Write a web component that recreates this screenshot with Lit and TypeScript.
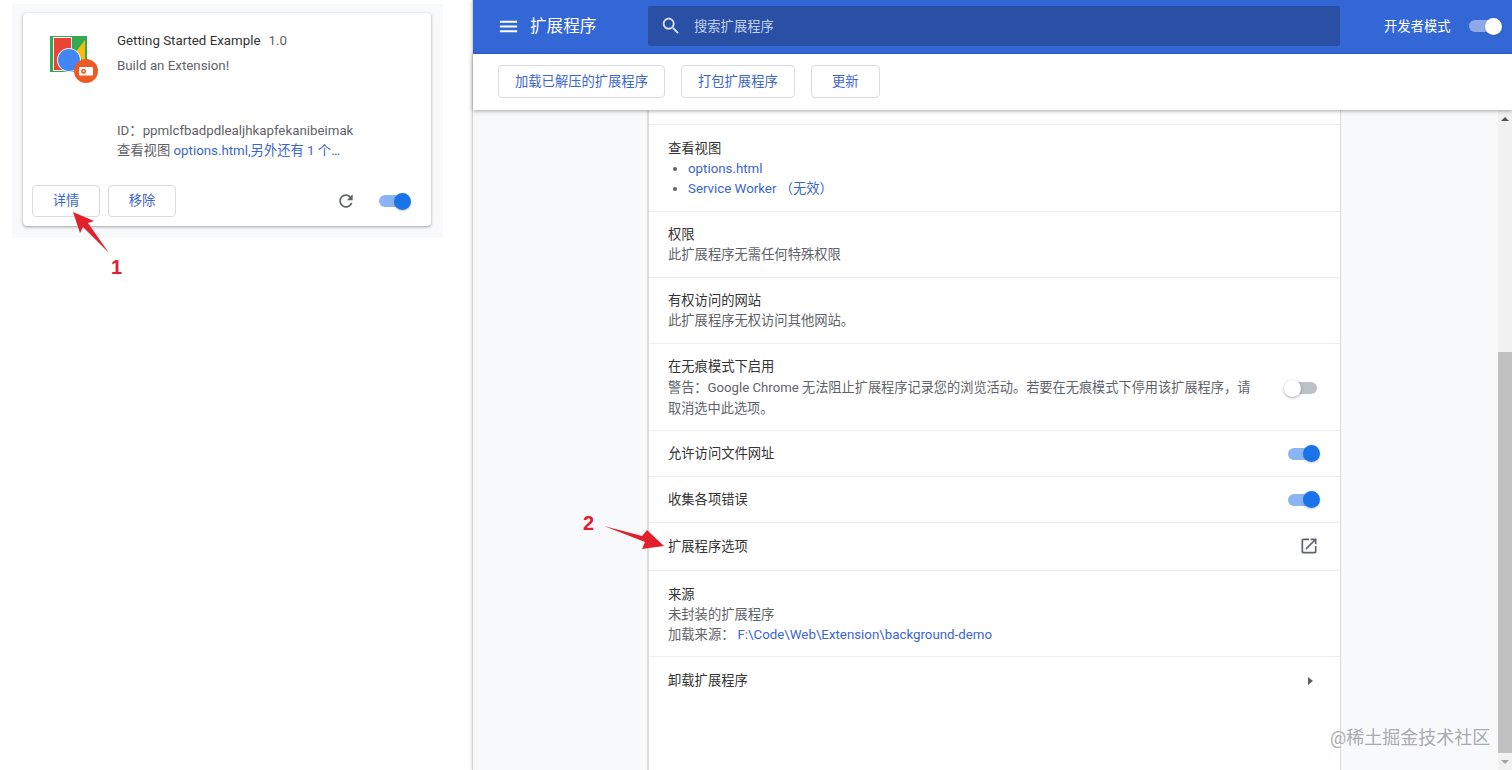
import { LitElement, html, css, svg } from "lit";
import { customElement, property } from "lit/decorators.js";

const ICONS = {
  menu: "M3 18h18v-2H3v2zm0-5h18v-2H3v2zm0-7v2h18V6H3z",
  search:
    "M15.5 14h-.79l-.28-.27C15.41 12.59 16 11.11 16 9.5 16 5.91 13.09 3 9.5 3S3 5.91 3 9.5 5.91 16 9.5 16c1.61 0 3.09-.59 4.23-1.57l.27.28v.79l5 4.99L20.49 19l-4.99-5zm-6 0C7.01 14 5 11.99 5 9.5S7.01 5 9.5 5 14 7.01 14 9.5 11.99 14 9.5 14z",
  refresh:
    "M17.65 6.35C16.2 4.9 14.21 4 12 4c-4.42 0-7.99 3.58-7.99 8s3.57 8 7.99 8c3.73 0 6.84-2.55 7.73-6h-2.08c-.82 2.33-3.04 4-5.65 4-3.31 0-6-2.69-6-6s2.69-6 6-6c1.66 0 3.14.69 4.22 1.78L13 11h7V4l-2.35 2.35z",
  open: "M19 19H5V5h7V3H5c-1.11 0-2 .9-2 2v14c0 1.1.89 2 2 2h14c1.1 0 2-.9 2-2v-7h-2v7zM14 3v2h3.59l-9.83 9.83 1.41 1.41L19 6.41V10h2V3h-7z",
};

const icon = (d: string, size: number, fill: string) => html`
  <svg width=${size} height=${size} viewBox="0 0 24 24" fill=${fill} style="flex:none;display:block">
    ${svg`<path d=${d}></path>`}
  </svg>
`;

@customElement("cr-toggle")
export class CrToggle extends LitElement {
  static styles = css`
    :host {
      display: block;
      position: relative;
      flex: none;
      width: 32px;
      height: 17px;
    }
    .bar {
      position: absolute;
      left: 0;
      right: 4px;
      top: 2.5px;
      height: 12px;
      border-radius: 6px;
      background: #8ab4f3;
    }
    .knob {
      position: absolute;
      right: 0;
      top: 0;
      width: 17px;
      height: 17px;
      border-radius: 50%;
      background: #1a73e8;
      box-shadow: 0 1px 2px rgba(60, 64, 67, 0.3);
    }
    :host([mode="off"]) {
      width: 33px;
    }
    :host([mode="off"]) .bar {
      left: 5px;
      right: 0;
      background: #bdc1c6;
    }
    :host([mode="off"]) .knob {
      left: 0;
      right: auto;
      background: #fff;
      box-shadow: 0 1px 3px rgba(60, 64, 67, 0.45);
    }
    :host([mode="light"]) {
      width: 33px;
    }
    :host([mode="light"]) .bar {
      background: #8ea9e4;
      right: 5px;
    }
    :host([mode="light"]) .knob {
      background: #fff;
    }
  `;

  @property({ reflect: true }) mode = "on";

  render() {
    return html`<div class="bar"></div><div class="knob"></div>`;
  }
}

@customElement("app-root")
export class AppRoot extends LitElement {
  static styles = css`
    :host {
      display: block;
      position: relative;
      width: 1512px;
      height: 770px;
      overflow: hidden;
      background: #fff;
      font-family: Roboto, "Noto Sans CJK SC", sans-serif;
      font-size: 13.3px;
      line-height: 20px;
      color: #333;
    }
    * {
      box-sizing: border-box;
    }
    .page {
      display: flex;
      height: 770px;
    }
    a {
      color: #3b66cf;
      text-decoration: none;
    }

    /* left screenshot */
    .left {
      flex: none;
      width: 472px;
      padding: 4px 0 0 12px;
    }
    .card-bg {
      width: 431px;
      height: 234px;
      padding: 9px 12px 9px 11px;
      background: #f8f9fa;
    }
    .card {
      display: flex;
      flex-direction: column;
      height: 213px;
      border-radius: 4px;
      background: #fff;
      box-shadow: 0 1px 2px rgba(60, 64, 67, 0.3), 0 1px 3px 1px rgba(60, 64, 67, 0.15);
    }
    .card-main {
      flex: 1;
      display: flex;
      padding: 18px 0 24px 27px;
    }
    .logo {
      flex: none;
      width: 67px;
    }
    .logo svg {
      display: block;
      margin-top: 5px;
    }
    .card-text {
      display: flex;
      flex-direction: column;
      flex: 1;
      color: #5f6368;
    }
    .name-line {
      display: flex;
      gap: 8px;
    }
    .name {
      color: #333;
    }
    .desc {
      margin-top: 5px;
    }
    .card-ext {
      margin-top: auto;
    }
    .card-foot {
      display: flex;
      align-items: center;
      gap: 8px;
      padding: 0 20px 9px 9px;
    }
    .card-foot .spacer {
      flex: 1;
    }
    .card-foot .reload {
      margin-right: 15px;
    }
    .btn {
      display: flex;
      align-items: center;
      justify-content: center;
      height: 33px;
      padding: 0 16px;
      border: 1px solid #dadce0;
      border-radius: 4px;
      background: #fff;
      color: #3b66cf;
    }
    .btn.small {
      width: 69px;
      padding: 0;
    }
    .card-foot .btn {
      width: 68px;
      height: 32px;
      padding: 0;
    }

    /* right screenshot */
    .right {
      flex: 1;
      min-width: 0;
      display: flex;
      flex-direction: column;
      border-left: 1px solid #d5d5d5;
      box-shadow: -1px 0 3px rgba(0, 0, 0, 0.12);
    }
    .header {
      flex: none;
      display: flex;
      height: 54px;
      padding: 6px 0 8px;
      background: #3367d6;
      color: #fff;
    }
    .brand {
      flex: none;
      display: flex;
      align-items: center;
      width: 175px;
      padding-left: 24px;
    }
    .brand span {
      margin-left: 10px;
      padding-top: 1px;
      font-size: 16.6px;
    }
    .search {
      flex: none;
      display: flex;
      align-items: center;
      width: 692px;
      padding-left: 12px;
      border-radius: 2px;
      background: #2a50a6;
      color: #c3d0ee;
    }
    .search span {
      margin-left: 12px;
      padding-top: 1px;
    }
    .mode {
      flex: 1;
      display: flex;
      align-items: center;
      padding-left: 44px;
      gap: 19px;
    }
    .mode span {
      padding-top: 1px;
    }
    .toolbar {
      flex: none;
      position: relative;
      z-index: 1;
      display: flex;
      align-items: center;
      gap: 16px;
      height: 56px;
      padding: 0 0 1px 25px;
      background: #fff;
      box-shadow: 0 1px 4px rgba(0, 0, 0, 0.35);
    }
    .body {
      flex: 1;
      min-height: 0;
      display: flex;
      background: #f8f9fa;
    }
    .center {
      flex: 1;
      padding-left: 174px;
    }
    .panel {
      width: 694px;
      height: 100%;
      padding-top: 14px;
      border-left: 2px solid #dcdcdc;
      border-right: 1px solid #dcdcdc;
      background: #fff;
    }
    .row {
      padding: 14px 20px 12px 19px;
      border-top: 1px solid #eeeeee;
      color: #5f6368;
    }
    .row .title {
      color: #333;
    }
    .row.tight {
      padding-top: 13px;
      padding-bottom: 12px;
    }
    .row.source {
      padding-top: 14px;
      padding-bottom: 11px;
    }
    .row ul {
      margin: 0;
      padding-left: 20px;
    }
    .row.warn {
      display: flex;
      justify-content: space-between;
      align-items: center;
      padding-top: 13px;
      padding-bottom: 11px;
    }
    .row.warn .warn-text {
      width: 590px;
    }
    .row.warn .warn-body {
      font-size: 13.2px;
      line-height: 21px;
    }
    .row.warn cr-toggle {
      margin-right: 3px;
    }
    .row.line {
      display: flex;
      align-items: center;
      justify-content: space-between;
      padding-top: 0;
      padding-bottom: 0;
      color: #333;
    }
    .row.line > svg {
      margin: -1px 1px 0 0;
    }
    .row.line.last {
      padding-top: 1px;
    }
    .h46 {
      height: 46px;
    }
    .h48 {
      height: 48px;
    }
    .source-link {
      margin-left: 3px;
    }
    .chevron {
      width: 0;
      height: 0;
      margin-right: 7px;
      border-left: 5px solid #5f6368;
      border-top: 4.5px solid transparent;
      border-bottom: 4.5px solid transparent;
    }
    .scrollbar {
      flex: none;
      display: flex;
      flex-direction: column;
      align-items: center;
      width: 14px;
      background: #f1f1f1;
    }
    .arrow-box {
      flex: none;
      display: flex;
      align-items: center;
      justify-content: center;
      width: 14px;
      height: 17px;
    }
    .up {
      border-left: 4px solid transparent;
      border-right: 4px solid transparent;
      border-bottom: 4px solid #505050;
    }
    .down {
      border-left: 4px solid transparent;
      border-right: 4px solid transparent;
      border-top: 4px solid #a3a3a3;
    }
    .track {
      flex: 1;
      width: 14px;
      padding-top: 225px;
    }
    .thumb {
      height: 401px;
      background: #c1c1c1;
    }

    /* annotations drawn over the screenshots */
    .marks {
      position: absolute;
      inset: 0;
      pointer-events: none;
    }
    .num {
      position: absolute;
      font: bold 20px/20px "Liberation Sans", sans-serif;
      color: #e2202c;
    }
    .n1 {
      left: 111px;
      top: 257px;
    }
    .n2 {
      left: 583px;
      top: 513px;
    }
    .watermark {
      position: absolute;
      left: 1330px;
      top: 726px;
      font-size: 18px;
      line-height: 24px;
      color: #a9abad;
      white-space: nowrap;
    }
  `;

  private renderLogo() {
    return html`
      <svg width="50" height="50" viewBox="0 0 50 50">
        <rect x="0" y="0" width="37" height="36" fill="#34a853"></rect>
        <rect x="3.5" y="1.5" width="18" height="33" fill="#ea4335" stroke="#f3f3f3" stroke-width="1"></rect>
        <path d="M35 4 L35 26 L25 17 Z" fill="#fbbc04"></path>
        <path d="M22 34 H36" stroke="#d6e6d8" stroke-width="1.5"></path>
        <circle cx="19" cy="24" r="11.5" fill="#4285f4" stroke="#e8eef8" stroke-width="1.2"></circle>
        <circle cx="36" cy="35" r="12" fill="#ee5a24"></circle>
        <rect x="29" y="31" width="14" height="8.5" rx="1" fill="#fff"></rect>
        <circle cx="33.5" cy="35.2" r="2.5" fill="#ee5a24"></circle>
        <circle cx="33.5" cy="35.2" r="0.9" fill="#fff"></circle>
      </svg>
    `;
  }

  private renderCard() {
    return html`
      <div class="left">
        <div class="card-bg">
          <div class="card">
            <div class="card-main">
              <div class="logo">${this.renderLogo()}</div>
              <div class="card-text">
                <div class="name-line">
                  <span class="name">Getting Started Example</span><span>1.0</span>
                </div>
                <div class="desc">Build an Extension!</div>
                <div class="card-ext">ID：ppmlcfbadpdlealjhkapfekanibeimak</div>
                <div>查看视图 <a>options.html,另外还有 1 个…</a></div>
              </div>
            </div>
            <div class="card-foot">
              <div class="btn">详情</div>
              <div class="btn">移除</div>
              <div class="spacer"></div>
              <div class="reload">${icon(ICONS.refresh, 20, "#5f6368")}</div>
              <cr-toggle></cr-toggle>
            </div>
          </div>
        </div>
      </div>
    `;
  }

  private renderDetails() {
    return html`
      <div class="panel">
        <div class="row">
          <div class="title">查看视图</div>
          <ul>
            <li><a>options.html</a></li>
            <li><a>Service Worker （无效）</a></li>
          </ul>
        </div>
        <div class="row tight">
          <div class="title">权限</div>
          <div>此扩展程序无需任何特殊权限</div>
        </div>
        <div class="row tight">
          <div class="title">有权访问的网站</div>
          <div>此扩展程序无权访问其他网站。</div>
        </div>
        <div class="row warn">
          <div class="warn-text">
            <div class="title">在无痕模式下启用</div>
            <div class="warn-body">警告：Google Chrome 无法阻止扩展程序记录您的浏览活动。若要在无痕模式下停用该扩展程序，请取消选中此选项。</div>
          </div>
          <cr-toggle mode="off"></cr-toggle>
        </div>
        <div class="row line h46">允许访问文件网址<cr-toggle></cr-toggle></div>
        <div class="row line h46">收集各项错误<cr-toggle></cr-toggle></div>
        <div class="row line h48">扩展程序选项${icon(ICONS.open, 20, "#5f6368")}</div>
        <div class="row source">
          <div class="title">来源</div>
          <div>未封装的扩展程序</div>
          <div>加载来源：<a class="source-link">F:\\Code\\Web\\Extension\\background-demo</a></div>
        </div>
        <div class="row line h48 last">卸载扩展程序<div class="chevron"></div></div>
      </div>
    `;
  }

  private renderExtensionsPage() {
    return html`
      <div class="right">
        <div class="header">
          <div class="brand">
            ${icon(ICONS.menu, 23, "#fff")}
            <span>扩展程序</span>
          </div>
          <div class="search">
            ${icon(ICONS.search, 22, "#d5dff5")}
            <span>搜索扩展程序</span>
          </div>
          <div class="mode"><span>开发者模式</span><cr-toggle mode="light"></cr-toggle></div>
        </div>
        <div class="toolbar">
          <div class="btn">加载已解压的扩展程序</div>
          <div class="btn">打包扩展程序</div>
          <div class="btn small">更新</div>
        </div>
        <div class="body">
          <div class="center">${this.renderDetails()}</div>
          <div class="scrollbar">
            <div class="arrow-box"><div class="up"></div></div>
            <div class="track"><div class="thumb"></div></div>
            <div class="arrow-box"><div class="down"></div></div>
          </div>
        </div>
      </div>
    `;
  }

  render() {
    return html`
      <div class="page">${this.renderCard()}${this.renderExtensionsPage()}</div>
      <div class="marks">
        <svg width="1512" height="770" viewBox="0 0 1512 770">
          <polygon points="73,212 94,221 88,223 109,253 83,227 80,233" fill="#e2202c"></polygon>
          <polygon points="604,526 642,536 647,530 664,546 642,549 645,542" fill="#e2202c"></polygon>
        </svg>
        <div class="num n1">1</div>
        <div class="num n2">2</div>
        <div class="watermark">@稀土掘金技术社区</div>
      </div>
    `;
  }
}
